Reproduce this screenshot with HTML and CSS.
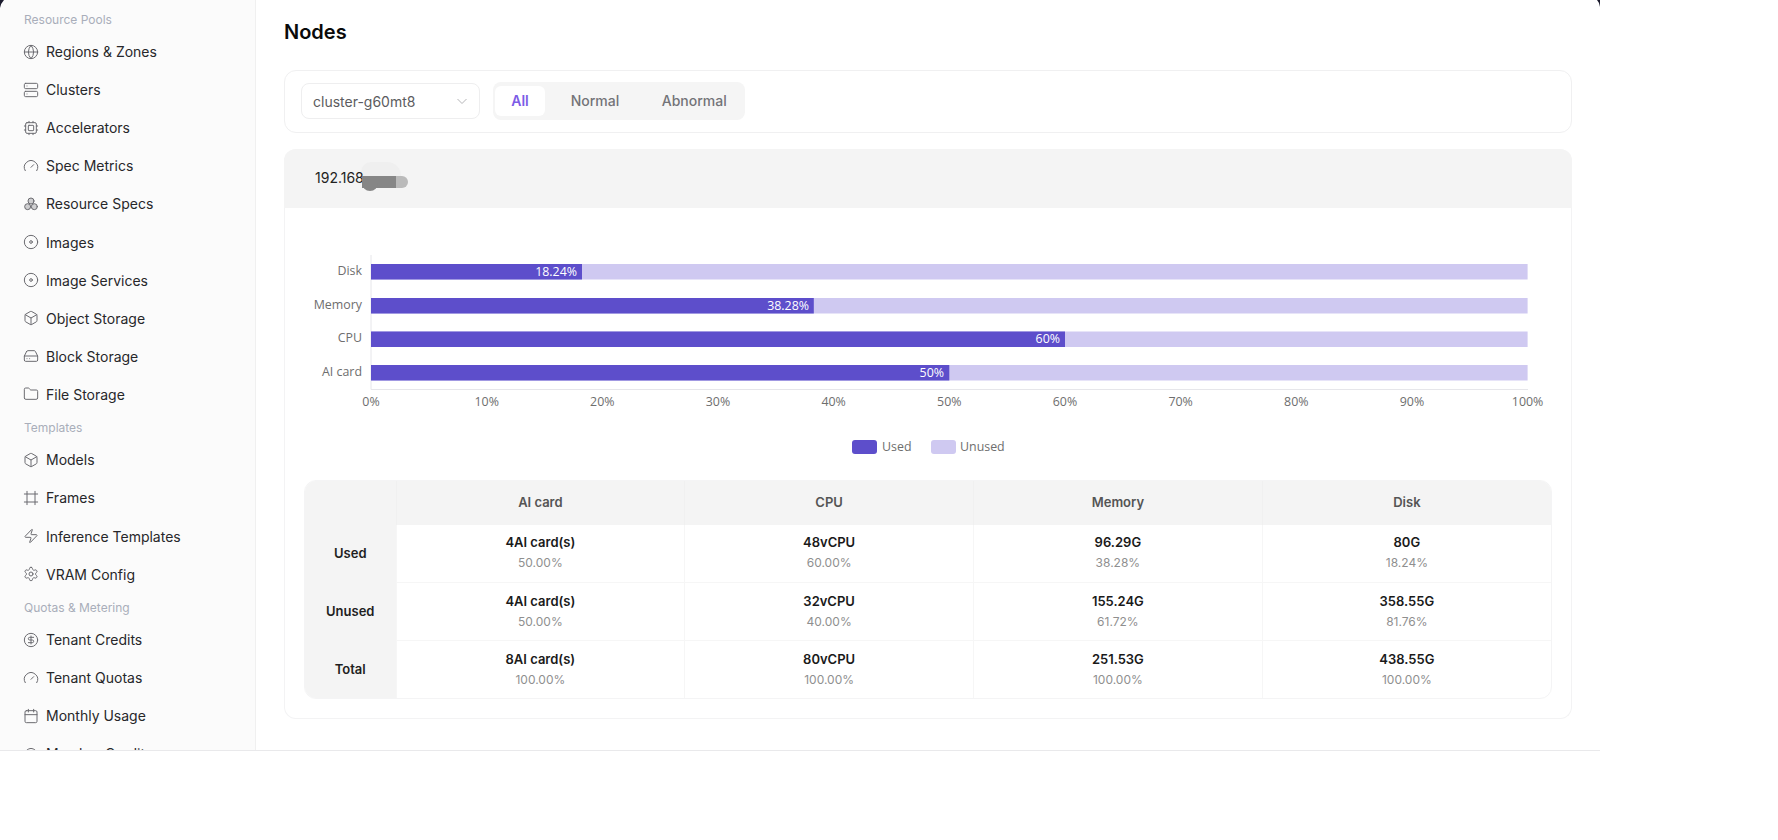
FILE: index.html
```html
<!DOCTYPE html>
<html lang="en">
<head>
    <meta charset="UTF-8">
    <title>Nodes</title>
    <link rel="stylesheet" href="styles.css">
</head>
<body>
    <!-- Icon set -->
    <svg class="icon-defs" aria-hidden="true">
        <symbol id="i-globe" viewBox="0 0 24 24"><circle cx="12" cy="12" r="10"/><path d="M12 2a14.5 14.5 0 0 0 0 20 14.5 14.5 0 0 0 0-20"/><path d="M2 12h20"/></symbol>
        <symbol id="i-server" viewBox="0 0 24 24"><rect x="2" y="2" width="20" height="8" rx="2"/><rect x="2" y="14" width="20" height="8" rx="2"/><path d="M6 6h.01M6 18h.01"/></symbol>
        <symbol id="i-cpu" viewBox="0 0 24 24"><rect x="4" y="4" width="16" height="16" rx="2"/><rect x="8" y="8" width="8" height="8" rx="1"/><path d="M15 2v2M15 20v2M2 15h2M2 9h2M20 15h2M20 9h2M9 2v2M9 20v2"/></symbol>
        <symbol id="i-gauge" viewBox="0 0 24 24"><path d="m12 14 4-4"/><path d="M3.34 19a10 10 0 1 1 17.32 0"/></symbol>
        <symbol id="i-specs" viewBox="0 0 24 24"><circle cx="12" cy="7.5" r="4.5" fill="#6b6b70" fill-opacity=".3"/><circle cx="7" cy="16" r="4.5" fill="#6b6b70" fill-opacity=".3"/><circle cx="17" cy="16" r="4.5" fill="#6b6b70" fill-opacity=".3"/></symbol>
        <symbol id="i-disc" viewBox="0 0 24 24"><circle cx="12" cy="12" r="10"/><circle cx="12" cy="12" r="2"/></symbol>
        <symbol id="i-box" viewBox="0 0 24 24"><path d="M21 8a2 2 0 0 0-1-1.73l-7-4a2 2 0 0 0-2 0l-7 4A2 2 0 0 0 3 8v8a2 2 0 0 0 1 1.73l7 4a2 2 0 0 0 2 0l7-4A2 2 0 0 0 21 16Z"/><path d="m3.3 7 8.7 5 8.7-5"/><path d="M12 22V12"/></symbol>
        <symbol id="i-drive" viewBox="0 0 24 24"><path d="M22 12H2"/><path d="M5.45 5.11 2 12v6a2 2 0 0 0 2 2h16a2 2 0 0 0 2-2v-6l-3.45-6.89A2 2 0 0 0 16.76 4H7.24a2 2 0 0 0-1.79 1.11z"/><path d="M6 16h.01M10 16h.01"/></symbol>
        <symbol id="i-folder" viewBox="0 0 24 24"><path d="M20 20a2 2 0 0 0 2-2V8a2 2 0 0 0-2-2h-7.9a2 2 0 0 1-1.69-.9L9.6 3.9A2 2 0 0 0 7.93 3H4a2 2 0 0 0-2 2v13a2 2 0 0 0 2 2Z"/></symbol>
        <symbol id="i-frame" viewBox="0 0 24 24"><path d="M22 6H2M22 18H2M6 2v20M18 2v20"/></symbol>
        <symbol id="i-zap" viewBox="0 0 24 24"><path d="M4 14a1 1 0 0 1-.78-1.63l9.9-10.2a.5.5 0 0 1 .86.46l-1.92 6.02A1 1 0 0 0 13 10h7a1 1 0 0 1 .78 1.63l-9.9 10.2a.5.5 0 0 1-.86-.46l1.92-6.02A1 1 0 0 0 11 14z"/></symbol>
        <symbol id="i-gear" viewBox="0 0 24 24"><path d="M12.22 2h-.44a2 2 0 0 0-2 2v.18a2 2 0 0 1-1 1.73l-.43.25a2 2 0 0 1-2 0l-.15-.08a2 2 0 0 0-2.73.73l-.22.38a2 2 0 0 0 .73 2.73l.15.1a2 2 0 0 1 1 1.72v.51a2 2 0 0 1-1 1.74l-.15.09a2 2 0 0 0-.73 2.73l.22.38a2 2 0 0 0 2.73.73l.15-.08a2 2 0 0 1 2 0l.43.25a2 2 0 0 1 1 1.73V20a2 2 0 0 0 2 2h.44a2 2 0 0 0 2-2v-.18a2 2 0 0 1 1-1.73l.43-.25a2 2 0 0 1 2 0l.15.08a2 2 0 0 0 2.73-.73l.22-.39a2 2 0 0 0-.73-2.73l-.15-.08a2 2 0 0 1-1-1.74v-.5a2 2 0 0 1 1-1.74l.15-.09a2 2 0 0 0 .73-2.73l-.22-.38a2 2 0 0 0-2.73-.73l-.15.08a2 2 0 0 1-2 0l-.43-.25a2 2 0 0 1-1-1.73V4a2 2 0 0 0-2-2z"/><circle cx="12" cy="12" r="3"/></symbol>
        <symbol id="i-dollar" viewBox="0 0 24 24"><circle cx="12" cy="12" r="10"/><path d="M16 8h-6a2 2 0 1 0 0 4h4a2 2 0 1 1 0 4H8"/><path d="M12 18V6"/></symbol>
        <symbol id="i-calendar" viewBox="0 0 24 24"><path d="M8 2v4M16 2v4"/><rect x="3" y="4" width="18" height="18" rx="2"/><path d="M3 10h18"/></symbol>
    </svg>

    <div class="frame">
        <!-- Dark corners of the window behind -->
        <svg class="corner corner-left" viewBox="0 0 5 8"><path d="M0 0H4Q1 3 0 8Z"/></svg>
        <svg class="corner corner-right" viewBox="0 0 4 7"><path d="M1 0H4V7Q3.5 2.5 1 0Z"/></svg>

        <aside class="sidebar">
            <div class="nav-label">Resource Pools</div>
            <a class="nav-item"><svg class="nav-icon"><use href="#i-globe"/></svg>Regions &amp; Zones</a>
            <a class="nav-item"><svg class="nav-icon"><use href="#i-server"/></svg>Clusters</a>
            <a class="nav-item"><svg class="nav-icon"><use href="#i-cpu"/></svg>Accelerators</a>
            <a class="nav-item"><svg class="nav-icon"><use href="#i-gauge"/></svg>Spec Metrics</a>
            <a class="nav-item"><svg class="nav-icon"><use href="#i-specs"/></svg>Resource Specs</a>
            <a class="nav-item"><svg class="nav-icon"><use href="#i-disc"/></svg>Images</a>
            <a class="nav-item"><svg class="nav-icon"><use href="#i-disc"/></svg>Image Services</a>
            <a class="nav-item"><svg class="nav-icon"><use href="#i-box"/></svg>Object Storage</a>
            <a class="nav-item"><svg class="nav-icon"><use href="#i-drive"/></svg>Block Storage</a>
            <a class="nav-item"><svg class="nav-icon"><use href="#i-folder"/></svg>File Storage</a>
            <div class="nav-label">Templates</div>
            <a class="nav-item"><svg class="nav-icon"><use href="#i-box"/></svg>Models</a>
            <a class="nav-item"><svg class="nav-icon"><use href="#i-frame"/></svg>Frames</a>
            <a class="nav-item"><svg class="nav-icon"><use href="#i-zap"/></svg>Inference Templates</a>
            <a class="nav-item"><svg class="nav-icon"><use href="#i-gear"/></svg>VRAM Config</a>
            <div class="nav-label">Quotas &amp; Metering</div>
            <a class="nav-item"><svg class="nav-icon"><use href="#i-dollar"/></svg>Tenant Credits</a>
            <a class="nav-item"><svg class="nav-icon"><use href="#i-gauge"/></svg>Tenant Quotas</a>
            <a class="nav-item"><svg class="nav-icon"><use href="#i-calendar"/></svg>Monthly Usage</a>
            <a class="nav-item"><svg class="nav-icon"><use href="#i-gauge"/></svg>Member Credits</a>
        </aside>

        <main class="content">
            <h1 class="page-title">Nodes</h1>

            <!-- Cluster select and status filter -->
            <div class="toolbar">
                <div class="select">
                    <span>cluster-g60mt8</span>
                    <svg class="select-arrow" viewBox="0 0 12 12"><path d="M1.5 4 6 8.5 10.5 4"/></svg>
                </div>
                <div class="tabs">
                    <span class="tab tab-active">All</span>
                    <span class="tab tab-normal">Normal</span>
                    <span class="tab tab-abnormal">Abnormal</span>
                </div>
            </div>

            <section class="node-card">
                <div class="node-header">
                    <span class="node-ip">192.168</span>
                    <span class="redact">
                        <span class="redact-light"></span>
                        <span class="redact-dark"></span>
                        <span class="redact-mid"></span>
                    </span>
                </div>

                <!-- Usage chart -->
                <svg class="chart" width="1286" height="272" viewBox="0 0 1286 272">
                    <g class="chart-axis">
                        <path d="M86 47V181.5H1243"/>
                    </g>
                    <g class="bars-unused">
                        <rect x="86" y="56" width="1156.6" height="15.5"/>
                        <rect x="86" y="90" width="1156.6" height="15.5"/>
                        <rect x="86" y="123.5" width="1156.6" height="15.5"/>
                        <rect x="86" y="157" width="1156.6" height="15.5"/>
                    </g>
                    <g class="bars-used">
                        <rect x="86" y="56" width="211" height="15.5"/>
                        <rect x="86" y="90" width="442.8" height="15.5"/>
                        <rect x="86" y="123.5" width="694" height="15.5"/>
                        <rect x="86" y="157" width="578.3" height="15.5"/>
                    </g>
                    <g class="bar-values">
                        <text x="292" y="67.5">18.24%</text>
                        <text x="524" y="101.5">38.28%</text>
                        <text x="775" y="135">60%</text>
                        <text x="659" y="168.5">50%</text>
                    </g>
                    <g class="cat-labels">
                        <text x="77" y="67">Disk</text>
                        <text x="77" y="100.5">Memory</text>
                        <text x="77" y="134">CPU</text>
                        <text x="77" y="167.5">AI card</text>
                    </g>
                    <g class="tick-labels">
                        <text x="86" y="198">0%</text>
                        <text x="201.7" y="198">10%</text>
                        <text x="317.3" y="198">20%</text>
                        <text x="433" y="198">30%</text>
                        <text x="548.6" y="198">40%</text>
                        <text x="664.3" y="198">50%</text>
                        <text x="780" y="198">60%</text>
                        <text x="895.6" y="198">70%</text>
                        <text x="1011.3" y="198">80%</text>
                        <text x="1127" y="198">90%</text>
                        <text x="1242.6" y="198">100%</text>
                    </g>
                    <rect class="swatch-used" x="567" y="232" width="25" height="14" rx="3"/>
                    <text class="legend-text" x="597" y="243">Used</text>
                    <rect class="swatch-unused" x="646" y="232" width="25" height="14" rx="3"/>
                    <text class="legend-text" x="675" y="243">Unused</text>
                </svg>

                <!-- Usage table -->
                <div class="table-wrap">
                    <table class="usage-table">
                        <thead>
                            <tr>
                                <th class="row-head"></th>
                                <th>AI card</th>
                                <th>CPU</th>
                                <th>Memory</th>
                                <th>Disk</th>
                            </tr>
                        </thead>
                        <tbody>
                            <tr>
                                <th class="row-head">Used</th>
                                <td><div class="val">4AI card(s)</div><div class="pct">50.00%</div></td>
                                <td><div class="val">48vCPU</div><div class="pct">60.00%</div></td>
                                <td><div class="val">96.29G</div><div class="pct">38.28%</div></td>
                                <td><div class="val">80G</div><div class="pct">18.24%</div></td>
                            </tr>
                            <tr>
                                <th class="row-head">Unused</th>
                                <td><div class="val">4AI card(s)</div><div class="pct">50.00%</div></td>
                                <td><div class="val">32vCPU</div><div class="pct">40.00%</div></td>
                                <td><div class="val">155.24G</div><div class="pct">61.72%</div></td>
                                <td><div class="val">358.55G</div><div class="pct">81.76%</div></td>
                            </tr>
                            <tr>
                                <th class="row-head">Total</th>
                                <td><div class="val">8AI card(s)</div><div class="pct">100.00%</div></td>
                                <td><div class="val">80vCPU</div><div class="pct">100.00%</div></td>
                                <td><div class="val">251.53G</div><div class="pct">100.00%</div></td>
                                <td><div class="val">438.55G</div><div class="pct">100.00%</div></td>
                            </tr>
                        </tbody>
                    </table>
                </div>
            </section>
        </main>
    </div>
</body>
</html>
```

FILE: styles.css
```css
* {
    box-sizing: border-box;
}
body {
    margin: 0;
    background-color: #fff;
    font-family: Inter, "Noto Sans", sans-serif;
    color: #1a1a1a;
}
.icon-defs {
    display: none;
}
.frame {
    position: relative;
    display: flex;
    width: 1600px;
    height: 751px;
    overflow: hidden;
    border-bottom: 1px solid #e9e9eb;
}
.corner {
    position: absolute;
    top: 0;
    fill: #1c1c2e;
}
.corner-left {
    left: 0;
    width: 5px;
    height: 8px;
}
.corner-right {
    right: 0;
    width: 4px;
    height: 7px;
}

/* Sidebar */
.sidebar {
    flex: 0 0 256px;
    height: 750px;
    overflow: hidden;
    padding-top: 5.5px;
    background-color: #fbfbfb;
    border-right: 1px solid #f0f0f0;
}
.nav-label {
    height: 27px;
    padding-left: 24px;
    line-height: 27px;
    font-size: 12px;
    color: #a9aeba;
}
.nav-item + .nav-label {
    margin-top: 0.4px;
}
.nav-item {
    display: flex;
    align-items: center;
    gap: 7px;
    height: 38.1px;
    padding-left: 23px;
    font-size: 14px;
    color: #27272a;
}
.nav-icon {
    width: 16px;
    height: 16px;
    flex: none;
    fill: none;
    stroke: #6b6b70;
    stroke-width: 1.5;
    stroke-linecap: round;
    stroke-linejoin: round;
}

/* Main */
.content {
    flex: 1;
    padding: 0 28px;
}
.page-title {
    height: 70px;
    margin: 0;
    padding-top: 19px;
    font-size: 20px;
    line-height: 26px;
    font-weight: 600;
    color: #0a0a0a;
}
.toolbar {
    display: flex;
    align-items: center;
    gap: 13px;
    height: 62.5px;
    padding-left: 16px;
    border: 1px solid #f0f0f1;
    border-radius: 12px;
}
.select {
    display: flex;
    align-items: center;
    justify-content: space-between;
    width: 179px;
    height: 36px;
    padding: 0 11px;
    border: 1px solid #eeeeef;
    border-radius: 8px;
    font-size: 14px;
    color: #5c5c60;
}
.select-arrow {
    width: 12px;
    height: 12px;
    fill: none;
    stroke: #b5b5b8;
    stroke-width: 1;
}
.tabs {
    display: flex;
    align-items: center;
    width: 252px;
    height: 38px;
    padding: 0 2px;
    background-color: #f5f5f5;
    border-radius: 8px;
}
.tab {
    flex: none;
    font-size: 14px;
    font-weight: 500;
    line-height: 30px;
    text-align: center;
    color: #737378;
}
.tab-active {
    width: 50px;
    background-color: #fff;
    border-radius: 6px;
    font-weight: 600;
    color: #7c5ce6;
}
.tab-normal {
    width: 100px;
}
.tab-abnormal {
    width: 98.5px;
}
.node-card {
    height: 569.5px;
    margin-top: 16.5px;
    border: 1px solid #f3f3f4;
    border-top: 0;
    border-radius: 12px;
}
.node-header {
    position: relative;
    height: 58.5px;
    margin: 0 -1px;
    padding-left: 31px;
    background-color: #f4f4f4;
    border-radius: 12px 12px 0 0;
    line-height: 57px;
    font-size: 14px;
    color: #222;
}
.node-ip {
    position: relative;
    z-index: 1;
}
.redact {
    position: absolute;
    left: 76px;
    top: 13px;
    width: 48px;
    height: 28px;
}
.redact-light {
    position: absolute;
    left: 1px;
    top: 0;
    width: 40px;
    height: 16px;
    background-color: #efefef;
    border-radius: 10px 14px 0 0;
}
.redact-dark {
    position: absolute;
    z-index: 2;
    left: 2px;
    top: 14px;
    width: 34px;
    height: 12px;
    background-color: #868686;
}
.redact-dark::after {
    content: "";
    position: absolute;
    left: 0;
    top: 0;
    width: 16px;
    height: 15px;
    background-color: #868686;
    border-radius: 0 0 8px 8px;
}
.redact-mid {
    position: absolute;
    z-index: 2;
    left: 36px;
    top: 14px;
    width: 12px;
    height: 12px;
    background-color: #bababa;
    border-radius: 0 6px 6px 0;
}

/* Chart */
.chart {
    display: block;
    font-family: "Open Sans", sans-serif;
    font-size: 12.4px;
}
.chart-axis path {
    fill: none;
    stroke: #e6e6ea;
    stroke-width: 1;
}
.bars-unused {
    fill: #cfc9f1;
}
.bars-used,
.swatch-used {
    fill: #5d4ecb;
}
.swatch-unused {
    fill: #cfc9f1;
}
.bar-values text {
    fill: #fff;
    text-anchor: end;
}
.cat-labels text {
    fill: #6e6e6e;
    text-anchor: end;
}
.tick-labels text {
    fill: #6e6e6e;
    text-anchor: middle;
}
.legend-text {
    fill: #6e6e6e;
}

/* Table */
.table-wrap {
    width: 1248px;
    height: 219px;
    margin-left: 19px;
    overflow: hidden;
    border: 1px solid #f4f4f5;
    border-radius: 12px;
}
.usage-table {
    width: 100%;
    table-layout: fixed;
    border-collapse: collapse;
    font-size: 13px;
}
.usage-table thead th {
    height: 44px;
    padding: 0 0 2px;
    background-color: #f4f4f4;
    border-left: 1px solid #f0f0f0;
    font-weight: 600;
    color: #555;
}
.usage-table tbody tr {
    height: 58px;
}
.usage-table td {
    padding: 0 0 1px;
    text-align: center;
    border-left: 1px solid #f6f6f6;
    border-bottom: 1px solid #f6f6f6;
}
.usage-table tbody tr:last-child td {
    border-bottom: 0;
}
.usage-table .row-head {
    width: 91px;
    padding: 0 0 2px;
    background-color: #f4f4f4;
    border-left: 0;
    font-weight: 600;
    color: #1f1f1f;
}
.val {
    font-weight: 600;
    line-height: 18px;
    color: #1a1a1a;
}
.pct {
    margin-top: 3px;
    font-size: 12px;
    line-height: 18px;
    color: #8f8f8f;
}
```
